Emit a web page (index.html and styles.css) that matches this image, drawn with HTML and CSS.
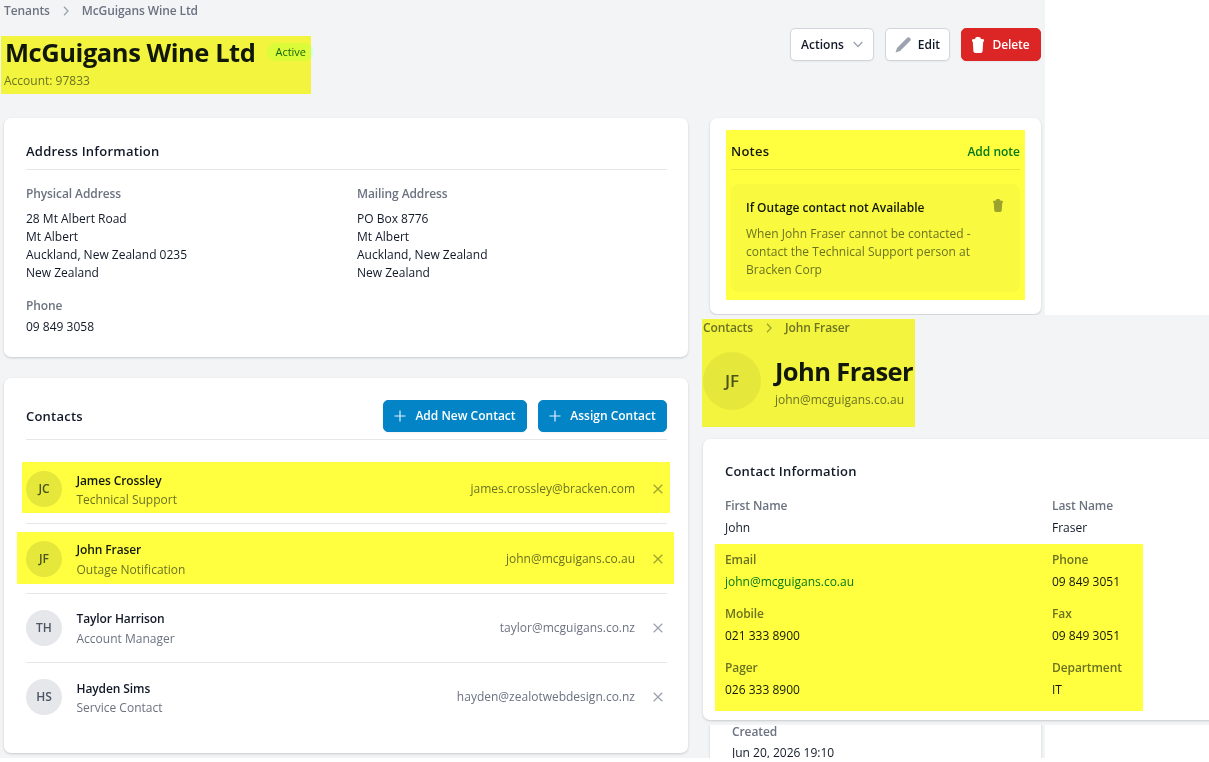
FILE: index.html
```html
<!DOCTYPE html>
<html lang="en">
<head>
    <meta charset="UTF-8">
    <meta name="viewport" content="width=device-width, initial-scale=1.0">
    <title>McGuigans Wine Ltd</title>
    <link rel="stylesheet" href="styles.css">
</head>
<body>
    <!-- shared icons -->
    <svg class="sprite" width="0" height="0">
        <symbol id="chevron" viewBox="0 0 10 10"><path d="M3 0.8 7 5 3 9.2" fill="none" stroke="currentColor" stroke-width="1.3"/></symbol>
        <symbol id="plus" viewBox="0 0 12 12"><path d="M6 0.5v11M0.5 6h11" fill="none" stroke="currentColor" stroke-width="1.2"/></symbol>
        <symbol id="cross" viewBox="0 0 10 10"><path d="M0.7 0.7l8.6 8.6M9.3 0.7 0.7 9.3" fill="none" stroke="currentColor" stroke-width="1.3"/></symbol>
        <symbol id="trash" viewBox="0 0 12 16"><path d="M3 2Q3.300 0 5 0h2q1.700 0 2 2L11.500 2.300Q12 2.500 12 3.100V4.600H11.200L10.600 14.200Q10.400 16 8.700 16h-5.400Q1.600 16 1.400 14.200L.800 4.600H0V3.100Q0 2.500.500 2.300z" fill="currentColor"/></symbol>
    </svg>

    <div class="tenant">
        <nav class="breadcrumb">
            <span>Tenants</span>
            <svg width="10" height="10"><use href="#chevron"/></svg>
            <span>McGuigans Wine Ltd</span>
        </nav>

        <header class="page-header">
            <div class="heading">
                <div class="title-row">
                    <h1>McGuigans Wine Ltd</h1>
                    <span class="badge">Active</span>
                </div>
                <p class="account">Account: 97833</p>
                <div class="marker marker-title"></div>
            </div>
            <div class="actions">
                <button class="btn btn-actions">Actions
                    <svg width="10" height="7" viewBox="0 0 10 7"><path d="M0.700 1 5 5.500 9.300 1" fill="none" stroke="#9ca3af" stroke-width="1.300"/></svg>
                </button>
                <button class="btn btn-edit">
                    <svg width="16" height="16" viewBox="0 0 16 16"><path d="M.5 15.500 2 10.900 11.900 1Q13.500-.300 15 1T15 4.100L5.100 14z" fill="#9ca3af"/></svg>
                    Edit
                </button>
                <button class="btn btn-danger">
                    <svg width="12" height="16"><use href="#trash"/></svg>
                    Delete
                </button>
            </div>
        </header>

        <div class="columns">
            <div class="main">
                <section class="card address">
                    <div class="card-header"><h2>Address Information</h2></div>
                    <div class="address-grid">
                        <div>
                            <h3>Physical Address</h3>
                            <p class="lines">28 Mt Albert Road<br>Mt Albert<br>Auckland, New Zealand 0235<br>New Zealand</p>
                        </div>
                        <div>
                            <h3>Mailing Address</h3>
                            <p class="lines">PO Box 8776<br>Mt Albert<br>Auckland, New Zealand<br>New Zealand</p>
                        </div>
                        <div>
                            <h3>Phone</h3>
                            <p class="phone">09 849 3058</p>
                        </div>
                    </div>
                </section>

                <section class="card contacts">
                    <div class="card-header">
                        <h2>Contacts</h2>
                        <div class="card-buttons">
                            <button class="btn btn-primary btn-add"><svg width="12" height="12"><use href="#plus"/></svg>Add New Contact</button>
                            <button class="btn btn-primary btn-assign"><svg width="12" height="12"><use href="#plus"/></svg>Assign Contact</button>
                        </div>
                    </div>
                    <ul class="contact-list">
                        <li>
                            <span class="avatar">JC</span>
                            <div class="who"><strong>James Crossley</strong><span>Technical Support</span></div>
                            <span class="email">james.crossley@bracken.com</span>
                            <svg class="remove" width="10" height="10"><use href="#cross"/></svg>
                            <div class="marker marker-james"></div>
                        </li>
                        <li>
                            <span class="avatar">JF</span>
                            <div class="who"><strong>John Fraser</strong><span>Outage Notification</span></div>
                            <span class="email">john@mcguigans.co.au</span>
                            <svg class="remove" width="10" height="10"><use href="#cross"/></svg>
                            <div class="marker marker-john"></div>
                        </li>
                        <li>
                            <span class="avatar">TH</span>
                            <div class="who"><strong>Taylor Harrison</strong><span>Account Manager</span></div>
                            <span class="email">taylor@mcguigans.co.nz</span>
                            <svg class="remove" width="10" height="10"><use href="#cross"/></svg>
                        </li>
                        <li>
                            <span class="avatar">HS</span>
                            <div class="who"><strong>Hayden Sims</strong><span>Service Contact</span></div>
                            <span class="email">hayden@zealotwebdesign.co.nz</span>
                            <svg class="remove" width="10" height="10"><use href="#cross"/></svg>
                        </li>
                    </ul>
                </section>
            </div>

            <aside class="side">
                <section class="card notes">
                    <div class="card-header">
                        <h2>Notes</h2>
                        <a class="link link-add">Add note</a>
                    </div>
                    <div class="note">
                        <div class="note-head">
                            <strong>If Outage contact not Available</strong>
                            <svg width="10" height="13"><use href="#trash"/></svg>
                        </div>
                        <p>When John Fraser cannot be contacted -<br>contact the Technical Support person at<br>Bracken Corp</p>
                    </div>
                    <div class="marker marker-notes"></div>
                </section>
                <section class="card meta">
                    <h3>Created</h3>
                    <p>Jun 20, 2026 19:10</p>
                </section>
            </aside>
        </div>
    </div>

    <!-- contact detail, stacked over the tenant page -->
    <div class="contact-panel">
        <div class="contact-top">
            <nav class="breadcrumb">
                <span>Contacts</span>
                <svg width="10" height="10"><use href="#chevron"/></svg>
                <span>John Fraser</span>
            </nav>
            <div class="person">
                <span class="avatar avatar-lg">JF</span>
                <div class="person-name">
                    <h1>John Fraser</h1>
                    <p>john@mcguigans.co.au</p>
                </div>
            </div>
            <div class="marker marker-person"></div>
        </div>
        <section class="card info">
            <h2>Contact Information</h2>
            <dl class="fields">
                <div><dt>First Name</dt><dd>John</dd></div>
                <div><dt>Last Name</dt><dd>Fraser</dd></div>
                <div><dt>Email</dt><dd><a class="link">john@mcguigans.co.au</a></dd></div>
                <div><dt>Phone</dt><dd>09 849 3051</dd></div>
                <div><dt>Mobile</dt><dd>021 333 8900</dd></div>
                <div><dt>Fax</dt><dd>09 849 3051</dd></div>
                <div><dt>Pager</dt><dd>026 333 8900</dd></div>
                <div><dt>Department</dt><dd>IT</dd></div>
            </dl>
            <div class="marker marker-fields"></div>
        </section>
    </div>
</body>
</html>
```

FILE: styles.css
```css
* { box-sizing: border-box; margin: 0; padding: 0; }
body {
    position: relative;
    width: 1209px;
    height: 762px;
    overflow: hidden;
    background: #fff;
    color: #111827;
    font: 12px/18px "Open Sans", "Noto Sans", sans-serif;
}
svg { display: block; flex: none; }
.sprite { position: absolute; }
h1 { font-size: 25.5px; line-height: 36px; font-weight: 700; letter-spacing: -0.45px; white-space: nowrap; }
h2 { font-size: 13px; line-height: 22px; font-weight: 600; letter-spacing: 0.22px; }
h3, dt { font-size: 12px; line-height: 18px; font-weight: 600; letter-spacing: -0.1px; color: #6b7280; }
ul { list-style: none; }
strong { font-weight: 600; }

.tenant { width: 1045px; height: 758px; padding: 0 4px; overflow: hidden; background: #f3f4f6; }

.breadcrumb { display: flex; align-items: center; gap: 11px; height: 20px; padding-top: 2px; font-weight: 600; letter-spacing: -0.1px; color: #6b7280; white-space: nowrap; }
.breadcrumb svg { color: #9ca3af; }

.page-header { display: flex; justify-content: space-between; align-items: flex-start; height: 98px; }
.heading { position: relative; margin-top: 14px; }
.title-row { display: flex; align-items: flex-start; gap: 12px; }
.title-row h1 { padding-left: 1px; }
.badge { margin-top: 9px; padding: 0 8px; border-radius: 9px; background: #dcfce7; color: #166534; font-size: 11px; line-height: 18px; }
.account { margin-top: 1px; line-height: 20px; color: #6b7280; }
.actions { display: flex; gap: 11px; margin-top: 8px; }

.btn { display: flex; align-items: center; justify-content: center; height: 33px; border: 1px solid #d1d5db; border-radius: 5px; background: #fff; color: #111827; font: 600 12px/18px "Open Sans", "Noto Sans", sans-serif; white-space: nowrap; box-shadow: 0 1px 2px rgba(0, 0, 0, 0.05); }
.btn-actions { width: 84px; gap: 9px; }
.btn-edit { width: 65px; gap: 7px; }
.btn-danger { width: 80px; gap: 8px; border-color: #dc2626; background: #dc2626; color: #fff; letter-spacing: -0.1px; }
.btn-primary { height: 32px; gap: 9px; border-color: #0284c7; background: #0284c7; color: #fff; }
.btn-primary svg { color: #e0f2fe; }
.btn-add { width: 144px; }
.btn-assign { width: 129px; }

.columns { display: grid; grid-template-columns: 684px 331px; gap: 22px; }
.card { position: relative; padding: 22px; border-radius: 7px; background: #fff; box-shadow: 0 1px 3px rgba(0, 0, 0, 0.12), 0 1px 2px rgba(0, 0, 0, 0.06); }
.card + .card { margin-top: 21px; }
.card-header { display: flex; align-items: center; justify-content: space-between; padding-bottom: 7px; border-bottom: 1px solid #e5e7eb; }
.card-buttons { display: flex; gap: 11px; }

.address { height: 239px; padding-right: 21px; }
.address-grid { display: grid; grid-template-columns: 309px 309px; gap: 15px 22px; margin-top: 15px; }
.lines { margin-top: 7px; }
.phone { margin-top: 3px; }

.contacts { height: 375px; padding-right: 21px; }
.contact-list { margin-top: 15px; }
.contact-list li { position: relative; display: flex; align-items: center; height: 69.4px; border-bottom: 1px solid #e5e7eb; }
.contact-list li:last-child { border-bottom-color: transparent; }
.avatar { display: flex; align-items: center; justify-content: center; flex: none; width: 36px; height: 36px; border-radius: 50%; background: #e5e7eb; color: #4b5563; font-weight: 600; }
.who { display: flex; flex-direction: column; flex: 1; margin-left: 14.5px; padding-top: 2px; line-height: 19.5px; }
.who strong { letter-spacing: -0.1px; }
.who span, .email { color: #6b7280; }
.remove { margin: 0 4px 0 18px; color: #9ca3af; }

.notes { padding: 22px 21px; }
.link { color: #047857; }
.link-add { padding-top: 2px; font-weight: 600; }
.note { margin-top: 14px; padding: 15px 14px 13px 15px; border-radius: 7px; background: #f9fafb; }
.note-head { display: flex; justify-content: space-between; }
.note-head svg { margin: 0 3px 0 0; color: #9ca3af; }
.note p { margin-top: 8px; color: #6b7280; white-space: nowrap; letter-spacing: 0.03px; }
.meta { display: flex; flex-direction: column; justify-content: flex-end; height: 449px; }
.meta p { margin-top: 3px; }

.contact-panel { position: absolute; left: 692px; top: 315px; width: 517px; height: 410px; padding: 2px 0 0 11px; overflow: hidden; background: #f3f4f6; }
.contact-top { position: relative; height: 122px; }
.person { display: flex; align-items: flex-start; gap: 14px; margin-top: 15px; }
.person-name { padding-top: 1px; }
.person p { margin-top: 1px; line-height: 20px; color: #6b7280; }
.person h1 { letter-spacing: -0.6px; }
.avatar-lg { width: 58px; height: 58px; font-size: 17px; }
.info { width: 676px; height: 281px; }
.info h2 { line-height: 20px; }
.fields { display: grid; grid-template-columns: 305px 305px; gap: 14px 22px; margin-top: 16px; }
.fields dd { margin-top: 4px; }

/* highlighter strokes laid over the content */
.marker { position: absolute; background: #ffff40; mix-blend-mode: multiply; }
.marker-title { left: -3px; top: 2px; width: 310px; height: 58px; }
.marker-james { left: -4px; top: 7px; width: 648px; height: 51px; }
.marker-john { left: -9px; top: 7.6px; width: 657px; height: 52px; }
.marker-notes { left: 16px; top: 12px; width: 299px; height: 170px; }
.marker-person { left: -1px; top: 2px; width: 213px; height: 108px; }
.marker-fields { left: 12px; top: 105px; width: 428px; height: 167px; }
```
